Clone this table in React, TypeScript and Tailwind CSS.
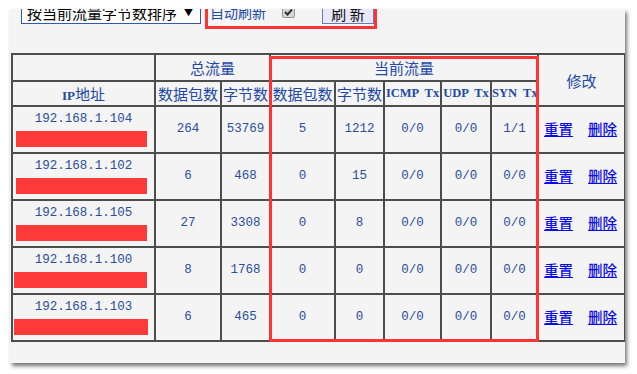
import React from 'react'

const rows = [
    { ip: '192.168.1.104', tp: '264', tb: '53769', cp: '5', cb: '1212', icmp: '0/0', udp: '0/0', syn: '1/1', bar: 'w-[131px] ml-[3px]' },
    { ip: '192.168.1.102', tp: '6', tb: '468', cp: '0', cb: '15', icmp: '0/0', udp: '0/0', syn: '0/0', bar: 'w-[131px] ml-[3px]' },
    { ip: '192.168.1.105', tp: '27', tb: '3308', cp: '0', cb: '8', icmp: '0/0', udp: '0/0', syn: '0/0', bar: 'w-[131px] ml-[3px]' },
    { ip: '192.168.1.100', tp: '8', tb: '1768', cp: '0', cb: '0', icmp: '0/0', udp: '0/0', syn: '0/0', bar: 'w-[133px] ml-[1px]' },
    { ip: '192.168.1.103', tp: '6', tb: '465', cp: '0', cb: '0', icmp: '0/0', udp: '0/0', syn: '0/0', bar: 'w-[134px] ml-[1px]' },
]

const cjk = "font-['Noto_Sans_CJK_SC',sans-serif]"
const mono = "font-['Liberation_Mono','Noto_Sans_CJK_SC',monospace]"
const serif = "font-['Liberation_Serif','Noto_Sans_CJK_SC',serif]"
const cell = 'border-2 border-[#4d4d4d] p-0 text-center align-middle'

export default function App() {
    return (
        <div className="w-[637px] h-[374px] bg-white pt-[9px] pl-[10px]">
            <div className="w-[615px] h-[354px] bg-[#f4f4f4] overflow-hidden shadow-[2px_3px_4px_rgba(0,0,0,0.55)]">
                {/* toolbar, its top edge is cropped like the original capture */}
                <div className="flex items-start -mt-[8px] ml-[11px]">
                    <div className={`w-[180px] h-[23px] border border-[#3657b0] bg-white flex items-center justify-between pl-[5px] pr-[7px] text-[15px] leading-none text-black ${cjk}`}>
                        <span>按当前流量字节数排序</span>
                        <span className="text-[9px]">▼</span>
                    </div>
                    <div className="ml-[4px] -mt-[2px] w-[172px] h-[30px] border-[3px] border-[#ff3333] flex items-start">
                        <span className={`ml-[2px] mt-[3px] text-[14px] leading-[14px] text-[#2149a6] ${cjk}`}>自动刷新</span>
                        <span className="ml-[16px] mt-[3px] w-[13px] h-[13px] rounded-[2px] border border-[#9a9a9a] bg-[#d6d6d6] flex items-center justify-center">
                            <svg width="9" height="8" viewBox="0 0 9 8">
                                <path d="M1 4 L3.5 6.5 L8 1.5" stroke="#333" strokeWidth="2" fill="none" />
                            </svg>
                        </span>
                        <button className={`ml-[27px] w-[52px] h-[22px] border border-[#6679c4] bg-[#e8e8f8] text-[15px] leading-none text-[#111] ${cjk}`}>
                            刷 新
                        </button>
                    </div>
                </div>

                <div className="relative mt-[24px] ml-[1px] w-[613px]">
                    <table className="table-fixed border-collapse w-[613px]">
                        <colgroup>
                            <col className="w-[143px]" />
                            <col className="w-[66px]" />
                            <col className="w-[49px]" />
                            <col className="w-[65px]" />
                            <col className="w-[49px]" />
                            <col className="w-[57px]" />
                            <col className="w-[50px]" />
                            <col className="w-[47px]" />
                            <col className="w-[87px]" />
                        </colgroup>
                        <thead className={`text-[15px] leading-none text-[#2149a6] ${cjk}`}>
                            <tr className="h-[27px]">
                                <th className={`${cell} font-normal`}></th>
                                <th className={`${cell} font-normal`} colSpan={2}>总流量</th>
                                <th className={`${cell} font-normal`} colSpan={5}>当前流量</th>
                                <th className={`${cell} font-normal`} rowSpan={2}>修改</th>
                            </tr>
                            <tr className="h-[25px]">
                                <th className={`${cell} font-bold text-[13px] ${serif}`}>
                                    IP<span className={`text-[15px] font-normal ${cjk}`}>地址</span>
                                </th>
                                <th className={`${cell} font-normal`}>数据包数</th>
                                <th className={`${cell} font-normal`}>字节数</th>
                                <th className={`${cell} font-normal`}>数据包数</th>
                                <th className={`${cell} font-normal`}>字节数</th>
                                <th className={`${cell} font-bold text-[12.5px] whitespace-pre ${serif}`}>ICMP  Tx</th>
                                <th className={`${cell} font-bold text-[12.5px] whitespace-pre ${serif}`}>UDP  Tx</th>
                                <th className={`${cell} font-bold text-[12.5px] whitespace-pre ${serif}`}>SYN  Tx</th>
                            </tr>
                        </thead>
                        <tbody className={`text-[12.5px] leading-none text-[#2a4d9c] ${mono}`}>
                            {rows.map((r) => (
                                <tr key={r.ip} className="h-[47px]">
                                    <td className={cell}>
                                        <div className="flex flex-col">
                                            <span className="leading-[14px]">{r.ip}</span>
                                            <span className={`mt-[5px] h-[16px] bg-[#fd3a3a] ${r.bar}`}></span>
                                        </div>
                                    </td>
                                    <td className={cell}>{r.tp}</td>
                                    <td className={cell}>{r.tb}</td>
                                    <td className={cell}>{r.cp}</td>
                                    <td className={cell}>{r.cb}</td>
                                    <td className={cell}>{r.icmp}</td>
                                    <td className={cell}>{r.udp}</td>
                                    <td className={cell}>{r.syn}</td>
                                    <td className={`${cell} text-left`}>
                                        <div className={`flex gap-[15px] pl-[5px] text-[14.5px] font-medium text-[#0b0be8] ${cjk}`}>
                                            <a href="#" className="underline">重置</a>
                                            <a href="#" className="underline">删除</a>
                                        </div>
                                    </td>
                                </tr>
                            ))}
                        </tbody>
                    </table>
                    {/* red annotation frame */}
                    <div className="absolute left-[258px] top-[3px] w-[270px] h-[286px] border-[3px] border-[#ff3333] pointer-events-none"></div>
                </div>
            </div>
        </div>
    )
}
